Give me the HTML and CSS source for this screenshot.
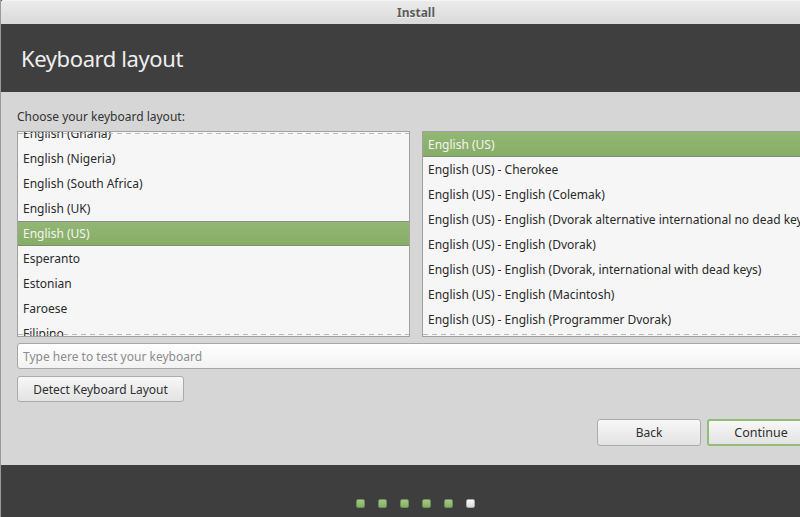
FILE: index.html
```html
<!DOCTYPE html>
<html>
<head>
<meta charset="utf-8">
<link rel="stylesheet" href="styles.css">
</head>
<body>
<div class="window">
  <div class="titlebar">Install</div>
  <div class="header">Keyboard layout</div>
  <div class="content">
    <div class="label">Choose your keyboard layout:</div>
    <div class="lists">
      <div class="list list-left undershoot-top undershoot-bottom">
        <div class="rows scrolled">
          <div class="row">English (Ghana)</div>
          <div class="row">English (Nigeria)</div>
          <div class="row">English (South Africa)</div>
          <div class="row">English (UK)</div>
          <div class="row selected">English (US)</div>
          <div class="row">Esperanto</div>
          <div class="row">Estonian</div>
          <div class="row">Faroese</div>
          <div class="row">Filipino</div>
        </div>
      </div>
      <div class="list list-right undershoot-bottom">
        <div class="rows">
          <div class="row selected">English (US)</div>
          <div class="row">English (US) - Cherokee</div>
          <div class="row">English (US) - English (Colemak)</div>
          <div class="row">English (US) - English (Dvorak alternative international no dead keys)</div>
          <div class="row">English (US) - English (Dvorak)</div>
          <div class="row">English (US) - English (Dvorak, international with dead keys)</div>
          <div class="row">English (US) - English (Macintosh)</div>
          <div class="row">English (US) - English (Programmer Dvorak)</div>
        </div>
      </div>
    </div>
    <input class="test-input" type="text" placeholder="Type here to test your keyboard">
    <div class="detect-row">
      <button class="btn detect">Detect Keyboard Layout</button>
    </div>
    <div class="actions">
      <button class="btn back">Back</button>
      <button class="btn continue">Continue</button>
    </div>
  </div>
  <div class="footer">
    <span class="dot done"></span>
    <span class="dot done"></span>
    <span class="dot done"></span>
    <span class="dot done"></span>
    <span class="dot done"></span>
    <span class="dot current"></span>
  </div>
</div>
</body>
</html>
```
FILE: styles.css
```css
html, body {
  margin: 0;
  padding: 0;
  overflow: hidden;
  width: 800px;
  height: 517px;
  background: #3e3e3e;
}

.window {
  width: 831px;
  height: 517px;
  display: flex;
  flex-direction: column;
  font-family: "Noto Sans", "DejaVu Sans", sans-serif;
  font-size: 12px;
  color: #2f2f2f;
  border-left: 1px solid #9a9a9a;
  box-sizing: border-box;
}

.titlebar {
  height: 24px;
  flex: none;
  background: linear-gradient(#ececec, #d9d9d9);
  border-top-left-radius: 3px;
  color: #5c5c5c;
  font-weight: bold;
  font-size: 12px;
  line-height: 26px;
  text-align: center;
  text-shadow: 0 1px 0 #f6f6f6;
  box-shadow: inset 0 1px 0 #f4f4f4;
}

.header {
  height: 68px;
  flex: none;
  background: #3f3f3f;
  color: #eeeeee;
  font-size: 22px;
  line-height: 68px;
  padding-left: 20px;
  letter-spacing: -0.4px;
}

.content {
  flex: 1;
  background: #d6d6d6;
  padding: 17px 0 0 16px;
  display: flex;
  flex-direction: column;
}

.label {
  height: 16px;
  line-height: 16px;
  color: #333;
}

.lists {
  margin-top: 6px;
  display: flex;
  gap: 12px;
}

.list {
  position: relative;
  height: 204px;
  border: 1px solid #a1a1a1;
  background: #f6f6f6;
  overflow: hidden;
  flex: none;
}

.list-left { width: 391px; }
.list-right { width: 392px; }

.undershoot-top::before,
.undershoot-bottom::after {
  content: "";
  position: absolute;
  left: 0;
  right: 0;
  height: 1px;
  background: repeating-linear-gradient(90deg, #b9b9b9 0 5px, transparent 5px 9px);
  z-index: 2;
}
.undershoot-top::before { top: 1px; }
.undershoot-bottom::after { bottom: 1px; }

.rows.scrolled { margin-top: -11px; }

.row {
  height: 25px;
  line-height: 25px;
  padding-left: 5px;
  white-space: nowrap;
  color: #2a2a2a;
}

.row.selected {
  background: linear-gradient(#93b775, #86ad65);
  color: #f4f4f4;
  box-shadow: inset 0 1px 0 #8d8d8d, inset 0 -1px 0 #7d8f6f;
}

.list-right .row.selected {
  box-shadow: inset 0 -1px 0 #7f8f72;
}

.test-input {
  margin: 6px 0 0 0;
  width: 798px;
  height: 26px;
  box-sizing: border-box;
  border: 1px solid #a8a8a8;
  border-radius: 3px;
  background: linear-gradient(#ffffff, #f2f2f2);
  font-family: "Noto Sans", "DejaVu Sans", sans-serif;
  font-size: 12px;
  padding: 0 5px;
  outline: none;
}
.test-input::placeholder { color: #8c8c8c; }

.btn {
  font-family: "Noto Sans", "DejaVu Sans", sans-serif;
  font-size: 12px;
  color: #2f2f2f;
  border: 1px solid #ababab;
  border-radius: 3px;
  background: linear-gradient(#f7f7f7, #e3e3e3);
  height: 26px;
  padding: 0;
  box-sizing: border-box;
}

.detect-row {
  margin-top: 7px;
  display: flex;
}
.detect { width: 167px; }

.actions {
  margin-top: 17px;
  display: flex;
  gap: 6px;
  padding-left: 580px;
}
.back {
  width: 104px;
  height: 27px;
}
.continue {
  width: 108px;
  height: 27px;
  border: 2px solid #94bb78;
  font-size: 12.5px;
}

.footer {
  height: 52px;
  flex: none;
  background: #3e3e3e;
  display: flex;
  align-items: flex-start;
  gap: 13px;
  padding: 34px 0 0 355px;
  box-sizing: border-box;
}

.dot {
  width: 9px;
  height: 9px;
  border-radius: 2px;
  box-sizing: border-box;
}
.dot.done {
  background: linear-gradient(#a2c985, #86b065);
  border: 1px solid #6f8e58;
}
.dot.current {
  background: linear-gradient(#fafafa, #dadada);
  border: 1px solid #a9a9a9;
}
```
